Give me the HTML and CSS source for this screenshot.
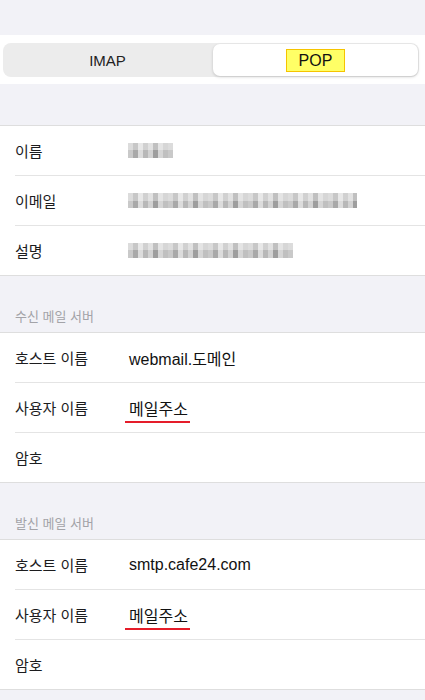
FILE: index.html
```html
<!DOCTYPE html>
<html lang="ko">
<head>
<meta charset="UTF-8">
<meta name="viewport" content="width=device-width, initial-scale=1.0">
<title>계정 설정</title>
<link rel="stylesheet" href="styles.css">
</head>
<body>

<div class="top-gap"></div>

<div class="seg-band">
  <div class="seg">
    <div class="seg-item">IMAP</div>
    <div class="seg-item active"><span class="mark">POP</span></div>
  </div>
</div>

<div class="gap"></div>

<div class="group">
  <div class="row"><div class="row-inner">
    <span class="label">이름</span>
    <span class="blur blur-name"></span>
  </div></div>
  <div class="row"><div class="row-inner">
    <span class="label">이메일</span>
    <span class="blur blur-mail"></span>
  </div></div>
  <div class="row"><div class="row-inner">
    <span class="label">설명</span>
    <span class="blur blur-desc"></span>
  </div></div>
</div>

<div class="group-head">수신 메일 서버</div>
<div class="group">
  <div class="row"><div class="row-inner">
    <span class="label">호스트 이름</span>
    <span class="value">webmail.도메인</span>
  </div></div>
  <div class="row"><div class="row-inner">
    <span class="label">사용자 이름</span>
    <span class="value underline">메일주소</span>
  </div></div>
  <div class="row"><div class="row-inner">
    <span class="label">암호</span>
  </div></div>
</div>

<div class="group-head">발신 메일 서버</div>
<div class="group">
  <div class="row"><div class="row-inner">
    <span class="label">호스트 이름</span>
    <span class="value">smtp.cafe24.com</span>
  </div></div>
  <div class="row"><div class="row-inner">
    <span class="label">사용자 이름</span>
    <span class="value underline">메일주소</span>
  </div></div>
  <div class="row"><div class="row-inner">
    <span class="label">암호</span>
  </div></div>
</div>

</body>
</html>
```

FILE: styles.css
```css
body {
  margin: 0;
  background-color: #f2f2f7;
  font-family: "Liberation Sans", "Noto Sans CJK KR", sans-serif;
  color: #1c1c1e;
}
.top-gap {
  height: 35px;
}
.seg-band {
  background: #fff;
  padding: 8px 6px 7px 3px;
}
.seg {
  display: grid;
  grid-template-columns: 1fr 1fr;
  height: 34px;
  padding: 1px;
  box-sizing: border-box;
  background: #ececec;
  border-radius: 8px;
}
.seg-item {
  display: flex;
  justify-content: center;
  align-items: center;
  font-size: 15px;
  color: #222;
}
.seg-item.active {
  background: #fff;
  border-radius: 7px;
  box-shadow: 0 1px 3px rgba(0, 0, 0, 0.18);
  margin-left: 2px;
}
.mark {
  display: inline-block;
  padding: 0 12px;
  line-height: 21px;
  font-size: 16px;
  background: #ffff66;
  border: 1px solid #f5c400;
  color: #111;
}
.gap {
  height: 41px;
}
.group {
  background: #fff;
  border-top: 1px solid #dedede;
  border-bottom: 1px solid #dedede;
}
.row {
  padding-left: 15px;
}
.row-inner {
  display: flex;
  align-items: center;
  height: 49px;
  border-bottom: 1px solid #e4e4e4;
}
.row:last-child .row-inner {
  border-bottom: none;
}
.label {
  width: 114px;
  flex-shrink: 0;
  font-size: 15px;
  color: #1c1c1e;
}
.value {
  font-size: 16px;
  color: #111;
}
.value.underline {
  margin-left: -4px;
  padding: 0 2px 1px 4px;
  margin-bottom: -3px;
  border-bottom: 2px solid #e51d2a;
}
.group-head {
  padding: 33px 15px 7px;
  font-size: 13px;
  line-height: 16px;
  color: #a3a3a8;
}
.blur {
  display: inline-block;
  height: 15px;
  margin-left: -1px;
  background:
    linear-gradient(to bottom, rgba(255, 255, 255, 0.35) 0 50%, rgba(255, 255, 255, 0) 50%),
    repeating-linear-gradient(90deg, #c9c9c9 0 5px, #a9a9a9 5px 10px, #dcdcdc 10px 15px, #b8b8b8 15px 20px, #d2d2d2 20px 25px, #9e9e9e 25px 30px, #d6d6d6 30px 35px, #c0c0c0 35px 40px);
}
.blur-name {
  width: 45px;
}
.blur-mail {
  width: 229px;
}
.blur-desc {
  width: 165px;
}
```
